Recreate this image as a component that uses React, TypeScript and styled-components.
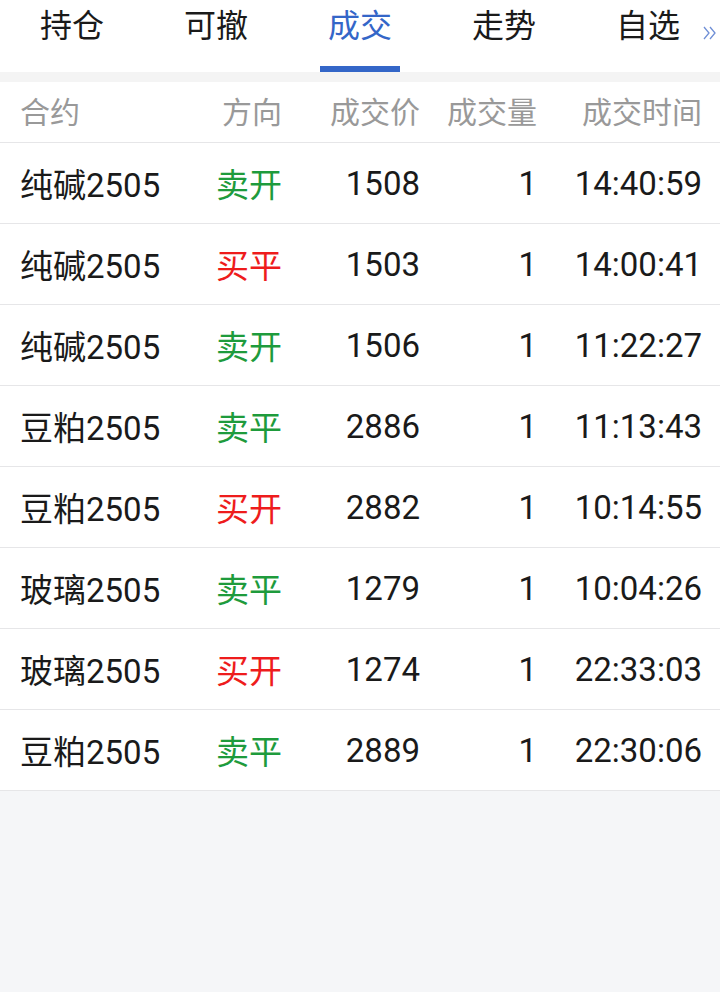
import styled, { createGlobalStyle } from "styled-components";

const GlobalStyle = createGlobalStyle`
  html, body {
    margin: 0;
    padding: 0;
    background: #f5f6f8;
  }
  body {
    font-family: Roboto, "Noto Sans CJK SC", sans-serif;
  }
`;

const Page = styled.div`
  width: 720px;
  min-height: 992px;
  background: #f5f6f8;
`;

const TabBar = styled.div`
  position: relative;
  display: grid;
  grid-template-columns: repeat(5, 144px);
  height: 72px;
  background: #fff;
`;

const Tab = styled.div<{ $active?: boolean }>`
  position: relative;
  display: flex;
  justify-content: center;
  padding-top: 5px;
  height: 67px;
  font-size: 32px;
  line-height: 42px;
  color: ${(p) => (p.$active ? "#3466c8" : "#1a1a1a")};

  &::after {
    content: "";
    display: ${(p) => (p.$active ? "block" : "none")};
    position: absolute;
    left: 32px;
    right: 32px;
    bottom: 0;
    height: 6px;
    background: #3466c8;
  }
`;

const More = styled.div`
  position: absolute;
  right: 2px;
  top: 23px;
  width: 16px;
  height: 20px;
`;

const Gap = styled.div`
  height: 10px;
  background: #f4f4f4;
`;

const Table = styled.div`
  background: #fff;
`;

const Row = styled.div<{ $head?: boolean }>`
  display: grid;
  grid-template-columns: 120px 142px 138px 117px 165px;
  align-items: center;
  box-sizing: border-box;
  height: ${(p) => (p.$head ? "61px" : "81px")};
  border-bottom: 1px solid #e6e6e8;
  padding: ${(p) => (p.$head ? "0 18px 5px 20px" : "0 18px 0 20px")};
  font-size: ${(p) => (p.$head ? "30px" : "33px")};
  color: ${(p) => (p.$head ? "#999" : "#1a1a1a")};
`;

const Cell = styled.div<{ $tone?: "buy" | "sell" }>`
  text-align: right;
  white-space: nowrap;
  color: ${(p) =>
    p.$tone === "buy" ? "#ee1c1c" : p.$tone === "sell" ? "#1e9b3c" : "inherit"};

  &:first-child {
    text-align: left;
  }
`;

const tabs = ["持仓", "可撤", "成交", "走势", "自选"];

const trades = [
  { name: "纯碱2505", dir: "卖开", price: 1508, qty: 1, time: "14:40:59" },
  { name: "纯碱2505", dir: "买平", price: 1503, qty: 1, time: "14:00:41" },
  { name: "纯碱2505", dir: "卖开", price: 1506, qty: 1, time: "11:22:27" },
  { name: "豆粕2505", dir: "卖平", price: 2886, qty: 1, time: "11:13:43" },
  { name: "豆粕2505", dir: "买开", price: 2882, qty: 1, time: "10:14:55" },
  { name: "玻璃2505", dir: "卖平", price: 1279, qty: 1, time: "10:04:26" },
  { name: "玻璃2505", dir: "买开", price: 1274, qty: 1, time: "22:33:03" },
  { name: "豆粕2505", dir: "卖平", price: 2889, qty: 1, time: "22:30:06" },
];

export default function App() {
  return (
    <>
      <GlobalStyle />
      <Page>
        <TabBar>
          {tabs.map((t) => (
            <Tab key={t} $active={t === "成交"}>
              {t}
            </Tab>
          ))}
          <More>
            <svg width="16" height="20" viewBox="0 0 16 20" fill="none" stroke="#6f8fd6" strokeWidth="1.3">
              <path d="M2 4l5 6-5 6M8 4l5 6-5 6" />
            </svg>
          </More>
        </TabBar>
        <Gap />
        <Table>
          <Row $head>
            <Cell>合约</Cell>
            <Cell>方向</Cell>
            <Cell>成交价</Cell>
            <Cell>成交量</Cell>
            <Cell>成交时间</Cell>
          </Row>
          {trades.map((r, i) => (
            <Row key={i}>
              <Cell>{r.name}</Cell>
              <Cell $tone={r.dir.startsWith("买") ? "buy" : "sell"}>{r.dir}</Cell>
              <Cell>{r.price}</Cell>
              <Cell>{r.qty}</Cell>
              <Cell>{r.time}</Cell>
            </Row>
          ))}
        </Table>
      </Page>
    </>
  );
}
